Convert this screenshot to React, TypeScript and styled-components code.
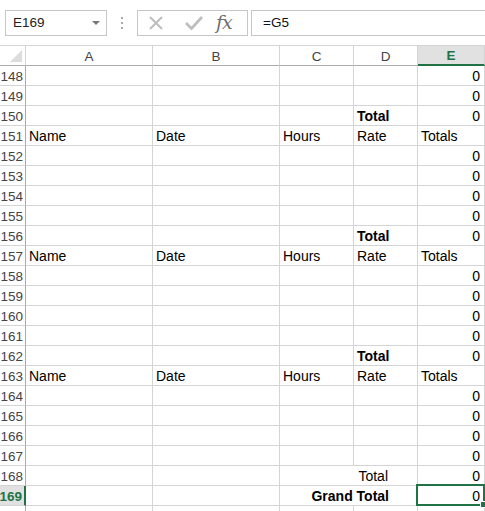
import React from "react";
import styled, { createGlobalStyle, css } from "styled-components";

const GlobalStyle = createGlobalStyle`
  html, body { margin: 0; padding: 0; background: #ffffff; }
  body { font-family: "Liberation Sans", Arial, sans-serif; color: #000; }
  * { box-sizing: border-box; }
`;

const GREEN = "#217346";
const GRID = "#d4d4d4";
const HEAD_LINE = "#ababab";

const Page = styled.div`
  width: 485px;
  height: 511px;
  overflow: hidden;
  background: #fff;
`;

const FormulaBar = styled.div`
  display: flex;
  align-items: center;
  height: 45px;
  padding: 0 0 0 5px;
`;

const NameBox = styled.div`
  width: 102px;
  height: 26px;
  border: 1px solid #c6c6c6;
  display: flex;
  align-items: center;
  justify-content: space-between;
  padding: 0 6px 0 7px;
  font-size: 13.5px;
  color: #222;
`;

const DropArrow = styled.span`
  width: 0;
  height: 0;
  border-left: 4px solid transparent;
  border-right: 4px solid transparent;
  border-top: 4px solid #777;
  margin-top: 1px;
`;

const Dots = styled.div`
  width: 30px;
  display: flex;
  flex-direction: column;
  align-items: center;
  gap: 3px;
  & > span {
    width: 2px;
    height: 2px;
    background: #a8a8a8;
  }
`;

const FxBox = styled.div`
  width: 111px;
  height: 26px;
  border: 1px solid #c6c6c6;
  display: flex;
  align-items: center;
  padding-left: 9px;
`;

const FxIcon = styled.span`
  font-family: "DejaVu Serif", "Liberation Serif", serif;
  font-style: italic;
  font-size: 19px;
  color: #6f6f6f;
  margin-left: 12px;
  margin-top: -2px;
  letter-spacing: -1px;
`;

const FormulaInput = styled.div`
  flex: 1;
  height: 26px;
  margin-left: 3px;
  border: 1px solid #c6c6c6;
  border-right: none;
  display: flex;
  align-items: center;
  padding-left: 11px;
  font-size: 13.5px;
  color: #111;
`;

const Sheet = styled.div`
  display: grid;
  grid-template-columns: 26px 127px 127px 74px 64px 67px;
  grid-auto-rows: 20px;
  border-top: 1px solid ${GRID};
  font-size: 14px;
`;

const Corner = styled.div`
  position: relative;
  border-right: 1px solid ${GRID};
  border-bottom: 1px solid ${HEAD_LINE};
  &::after {
    content: "";
    position: absolute;
    right: 3px;
    bottom: 3px;
    width: 0;
    height: 0;
    border-left: 12px solid transparent;
    border-bottom: 12px solid #dcdcdc;
  }
`;

const ColHead = styled.div<{ $active?: boolean }>`
  display: flex;
  align-items: center;
  justify-content: center;
  border-right: 1px solid ${GRID};
  border-bottom: 1px solid ${HEAD_LINE};
  color: #444;
  font-size: 13.5px;
  padding-top: 1px;
  ${(p) =>
    p.$active &&
    css`
      background: #e1e1e1;
      color: ${GREEN};
      font-weight: bold;
      border-bottom: 2px solid ${GREEN};
    `}
`;

const RowHead = styled.div<{ $active?: boolean }>`
  display: flex;
  align-items: center;
  justify-content: flex-end;
  padding: 1px 2px 0 0;
  border-right: 1px solid ${HEAD_LINE};
  border-bottom: 1px solid ${GRID};
  color: #444;
  font-size: 13.5px;
  ${(p) =>
    p.$active &&
    css`
      background: #e1e1e1;
      color: ${GREEN};
      font-weight: bold;
      border-right: 2px solid ${GREEN};
    `}
`;

const Cell = styled.div<{
  $align?: "left" | "right";
  $bold?: boolean;
  $span?: number;
  $padRight?: number;
  $selected?: boolean;
}>`
  position: relative;
  display: flex;
  align-items: center;
  justify-content: ${(p) => (p.$align === "right" ? "flex-end" : "flex-start")};
  padding: 1px ${(p) => p.$padRight ?? 4}px 0 3px;
  border-right: 1px solid ${GRID};
  border-bottom: 1px solid ${GRID};
  font-weight: ${(p) => (p.$bold ? "bold" : "normal")};
  white-space: nowrap;
  grid-column: span ${(p) => p.$span ?? 1};
  ${(p) =>
    p.$selected &&
    css`
      &::after {
        content: "";
        position: absolute;
        top: -2px;
        left: -2px;
        right: -1px;
        bottom: -1px;
        border: 2px solid ${GREEN};
        pointer-events: none;
      }
      &::before {
        content: "";
        position: absolute;
        right: -3px;
        bottom: -3px;
        width: 5px;
        height: 5px;
        background: ${GREEN};
        border: 1px solid #fff;
        z-index: 2;
      }
    `}
`;

type CellDef = {
  text?: string;
  align?: "left" | "right";
  bold?: boolean;
  span?: number;
  padRight?: number;
  selected?: boolean;
};

type RowDef = { n: number; label?: string; cells: CellDef[]; active?: boolean };

const zero: CellDef = { text: "0", align: "right" };
const blank: CellDef = {};

const emptyRow = (n: number): RowDef => ({ n, cells: [blank, blank, blank, blank, zero] });
const totalRow = (n: number): RowDef => ({
  n,
  cells: [blank, blank, blank, { text: "Total", bold: true }, zero],
});
const headRow = (n: number): RowDef => ({
  n,
  cells: [{ text: "Name" }, { text: "Date" }, { text: "Hours" }, { text: "Rate" }, { text: "Totals" }],
});

const rows: RowDef[] = [
  emptyRow(148),
  emptyRow(149),
  totalRow(150),
  headRow(151),
  emptyRow(152),
  emptyRow(153),
  emptyRow(154),
  emptyRow(155),
  totalRow(156),
  headRow(157),
  emptyRow(158),
  emptyRow(159),
  emptyRow(160),
  emptyRow(161),
  totalRow(162),
  headRow(163),
  emptyRow(164),
  emptyRow(165),
  emptyRow(166),
  emptyRow(167),
  {
    n: 168,
    cells: [blank, blank, { text: "Total", align: "right", span: 2, padRight: 29 }, zero],
  },
  {
    n: 169,
    active: true,
    cells: [
      blank,
      blank,
      { text: "Grand Total", align: "right", bold: true, span: 2, padRight: 28 },
      { text: "0", align: "right", selected: true },
    ],
  },
  { n: 170, label: "", cells: [blank, blank, blank, blank, blank] },
];

const XIcon = () => (
  <svg width="18" height="18" viewBox="0 0 18 18">
    <path d="M3 3 L15 15 M15 3 L3 15" stroke="#bdbdbd" strokeWidth="2" fill="none" />
  </svg>
);

const CheckIcon = () => (
  <svg width="20" height="18" viewBox="0 0 20 18" style={{ marginLeft: 19 }}>
    <path d="M2 9 L7.5 14.5 L18 3" stroke="#bdbdbd" strokeWidth="2.6" fill="none" />
  </svg>
);

export default function App() {
  return (
    <Page>
      <GlobalStyle />
      <FormulaBar>
        <NameBox>
          <span>E169</span>
          <DropArrow />
        </NameBox>
        <Dots>
          <span />
          <span />
          <span />
        </Dots>
        <FxBox>
          <XIcon />
          <CheckIcon />
          <FxIcon>fx</FxIcon>
        </FxBox>
        <FormulaInput>=G5</FormulaInput>
      </FormulaBar>
      <Sheet>
        <Corner />
        {["A", "B", "C", "D", "E"].map((c) => (
          <ColHead key={c} $active={c === "E"}>
            {c}
          </ColHead>
        ))}
        {rows.map((r) => (
          <React.Fragment key={r.n}>
            <RowHead $active={r.active}>{r.label ?? r.n}</RowHead>
            {r.cells.map((c, i) => (
              <Cell
                key={i}
                $align={c.align}
                $bold={c.bold}
                $span={c.span}
                $padRight={c.padRight}
                $selected={c.selected}
              >
                {c.text}
              </Cell>
            ))}
          </React.Fragment>
        ))}
      </Sheet>
    </Page>
  );
}
